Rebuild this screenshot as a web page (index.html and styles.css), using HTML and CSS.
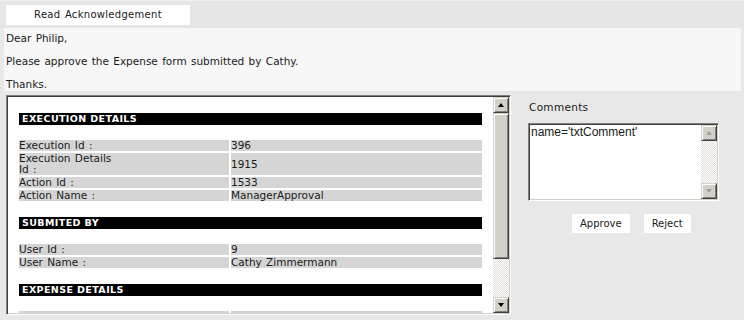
FILE: index.html
```html
<!DOCTYPE html>
<html lang="en">
<head>
    <meta charset="UTF-8">
    <meta name="viewport" content="width=device-width, initial-scale=1.0">
    <title>Read Acknowledgement</title>
    <link rel="stylesheet" href="styles.css">
</head>
<body>
    <div class="tabs">
        <div class="tab">Read Acknowledgement</div>
    </div>
    <div class="message">
        <p>Dear Philip,</p>
        <p>Please approve the Expense form submitted by Cathy.</p>
        <p>Thanks.</p>
    </div>
    <div class="main">
        <div class="frame">
            <div class="frame-content">
                <div class="section">
                    <div class="bar">EXECUTION DETAILS</div>
                    <div class="grid">
                        <div class="label">Execution Id :</div><div class="value">396</div>
                        <div class="label">Execution Details<br>Id :</div><div class="value">1915</div>
                        <div class="label">Action Id :</div><div class="value">1533</div>
                        <div class="label">Action Name :</div><div class="value">ManagerApproval</div>
                    </div>
                </div>
                <div class="section">
                    <div class="bar">SUBMITED BY</div>
                    <div class="grid">
                        <div class="label">User Id :</div><div class="value">9</div>
                        <div class="label">User Name :</div><div class="value">Cathy Zimmermann</div>
                    </div>
                </div>
                <div class="section">
                    <div class="bar">EXPENSE DETAILS</div>
                    <div class="grid">
                        <div class="label empty"></div><div class="value empty"></div>
                    </div>
                </div>
            </div>
            <div class="scrollbar">
                <div class="sb-btn"><span class="arrow up"></span></div>
                <div class="sb-thumb"></div>
                <div class="sb-track"></div>
                <div class="sb-btn"><span class="arrow down"></span></div>
            </div>
        </div>
        <div class="side">
            <div class="side-title">Comments</div>
            <div class="textarea">
                <div class="textarea-text">name='txtComment'</div>
                <div class="scrollbar disabled">
                    <div class="sb-btn"><span class="arrow up"></span></div>
                    <div class="sb-track"></div>
                    <div class="sb-btn"><span class="arrow down"></span></div>
                </div>
            </div>
            <div class="actions">
                <button class="btn">Approve</button>
                <button class="btn">Reject</button>
            </div>
        </div>
    </div>
</body>
</html>
```

FILE: styles.css
```css
body {
    margin: 0;
    background-color: #e8e8e8;
    font-family: "DejaVu Sans", Verdana, sans-serif;
    font-size: 10.5px;
    word-spacing: 1px;
    color: #1a1a1a;
    width: 744px;
    height: 320px;
    overflow: hidden;
}

.tabs {
    height: 28px;
    box-sizing: border-box;
    padding: 4px 0 0 6px;
    background-color: #e6e6e6;
    border-top: 1px solid #f0f0f0;
}
.tab {
    width: 184px;
    height: 20px;
    line-height: 20px;
    background-color: #fff;
    text-align: center;
    font-size: 10px;
    letter-spacing: 0.3px;
}

.message {
    height: 63px;
    box-sizing: border-box;
    margin: 0 3px 0 4px;
    padding: 4px 2px 0 2px;
    background-color: #f7f7f7;
}
.message p {
    margin: 0 0 11px;
    line-height: 12px;
}

.main {
    display: flex;
    align-items: flex-start;
    padding: 4px 0 0 6px;
}

.frame {
    display: flex;
    width: 505px;
    height: 220px;
    box-sizing: border-box;
    border: 1px solid;
    border-color: #808080 #fff #fff #808080;
    box-shadow: inset 1px 1px #404040, inset -1px -1px #d4d0c8;
    padding: 1px;
    background-color: #fff;
}
.frame-content {
    flex: 1;
    padding: 16px 11px 0 11px;
    overflow: hidden;
}
.section {
    margin-bottom: 16px;
}
.bar {
    height: 12px;
    line-height: 12px;
    background-color: #000;
    color: #fff;
    font-weight: bold;
    font-size: 9.5px;
    padding-left: 3px;
    letter-spacing: 0.4px;
    word-spacing: 0;
    margin-bottom: 15px;
}
.grid {
    display: grid;
    grid-template-columns: 210px 1fr;
    gap: 2px;
    line-height: 11px;
}
.label, .value {
    background-color: #d5d5d5;
    display: flex;
    align-items: center;
}
.empty {
    height: 11px;
}

.scrollbar {
    width: 16px;
    display: flex;
    flex-direction: column;
    flex-shrink: 0;
}
.sb-btn {
    height: 16px;
    box-sizing: border-box;
    background-color: #d4d0c8;
    border: 1px solid;
    border-color: #d4d0c8 #404040 #404040 #d4d0c8;
    box-shadow: inset 1px 1px #fff, inset -1px -1px #808080;
    display: flex;
    align-items: center;
    justify-content: center;
}
.sb-thumb {
    height: 146px;
    box-sizing: border-box;
    background-color: #d4d0c8;
    border: 1px solid;
    border-color: #d4d0c8 #404040 #404040 #d4d0c8;
    box-shadow: inset 1px 1px #fff, inset -1px -1px #808080;
}
.sb-track {
    flex: 1;
    background-color: #f4f3f0;
    background-image: conic-gradient(#e2dfd8 25%, #fff 0 50%, #e2dfd8 0 75%, #fff 0);
    background-size: 2px 2px;
}
.arrow {
    width: 0;
    height: 0;
    border-left: 3.5px solid transparent;
    border-right: 3.5px solid transparent;
}
.arrow.up {
    border-bottom: 4px solid #000;
}
.arrow.down {
    border-top: 4px solid #000;
}
.scrollbar.disabled .arrow.up {
    border-bottom-color: #a0a0a0;
}
.scrollbar.disabled .arrow.down {
    border-top-color: #a0a0a0;
}

.side {
    margin-left: 17px;
    padding-top: 6px;
}
.side-title {
    line-height: 12px;
    padding-left: 1px;
    letter-spacing: 0.3px;
}
.textarea {
    display: flex;
    width: 191px;
    height: 78px;
    margin-top: 10px;
    box-sizing: border-box;
    border: 1px solid;
    border-color: #808080 #fff #fff #808080;
    box-shadow: inset 1px 1px #404040, inset -1px -1px #d4d0c8;
    padding: 1px;
    background-color: #fff;
}
.textarea-text {
    flex: 1;
    font-family: "Liberation Sans", Arial, sans-serif;
    font-size: 12px;
    word-spacing: 0;
    line-height: 14px;
    padding-left: 1px;
}

.actions {
    display: flex;
    gap: 14px;
    margin-top: 13px;
    padding-left: 44px;
}
.btn {
    height: 19px;
    border: none;
    background-color: #fff;
    font-family: "DejaVu Sans", Verdana, sans-serif;
    font-size: 10px;
    color: #1a1a1a;
    padding: 0 8px;
    cursor: pointer;
}
```
